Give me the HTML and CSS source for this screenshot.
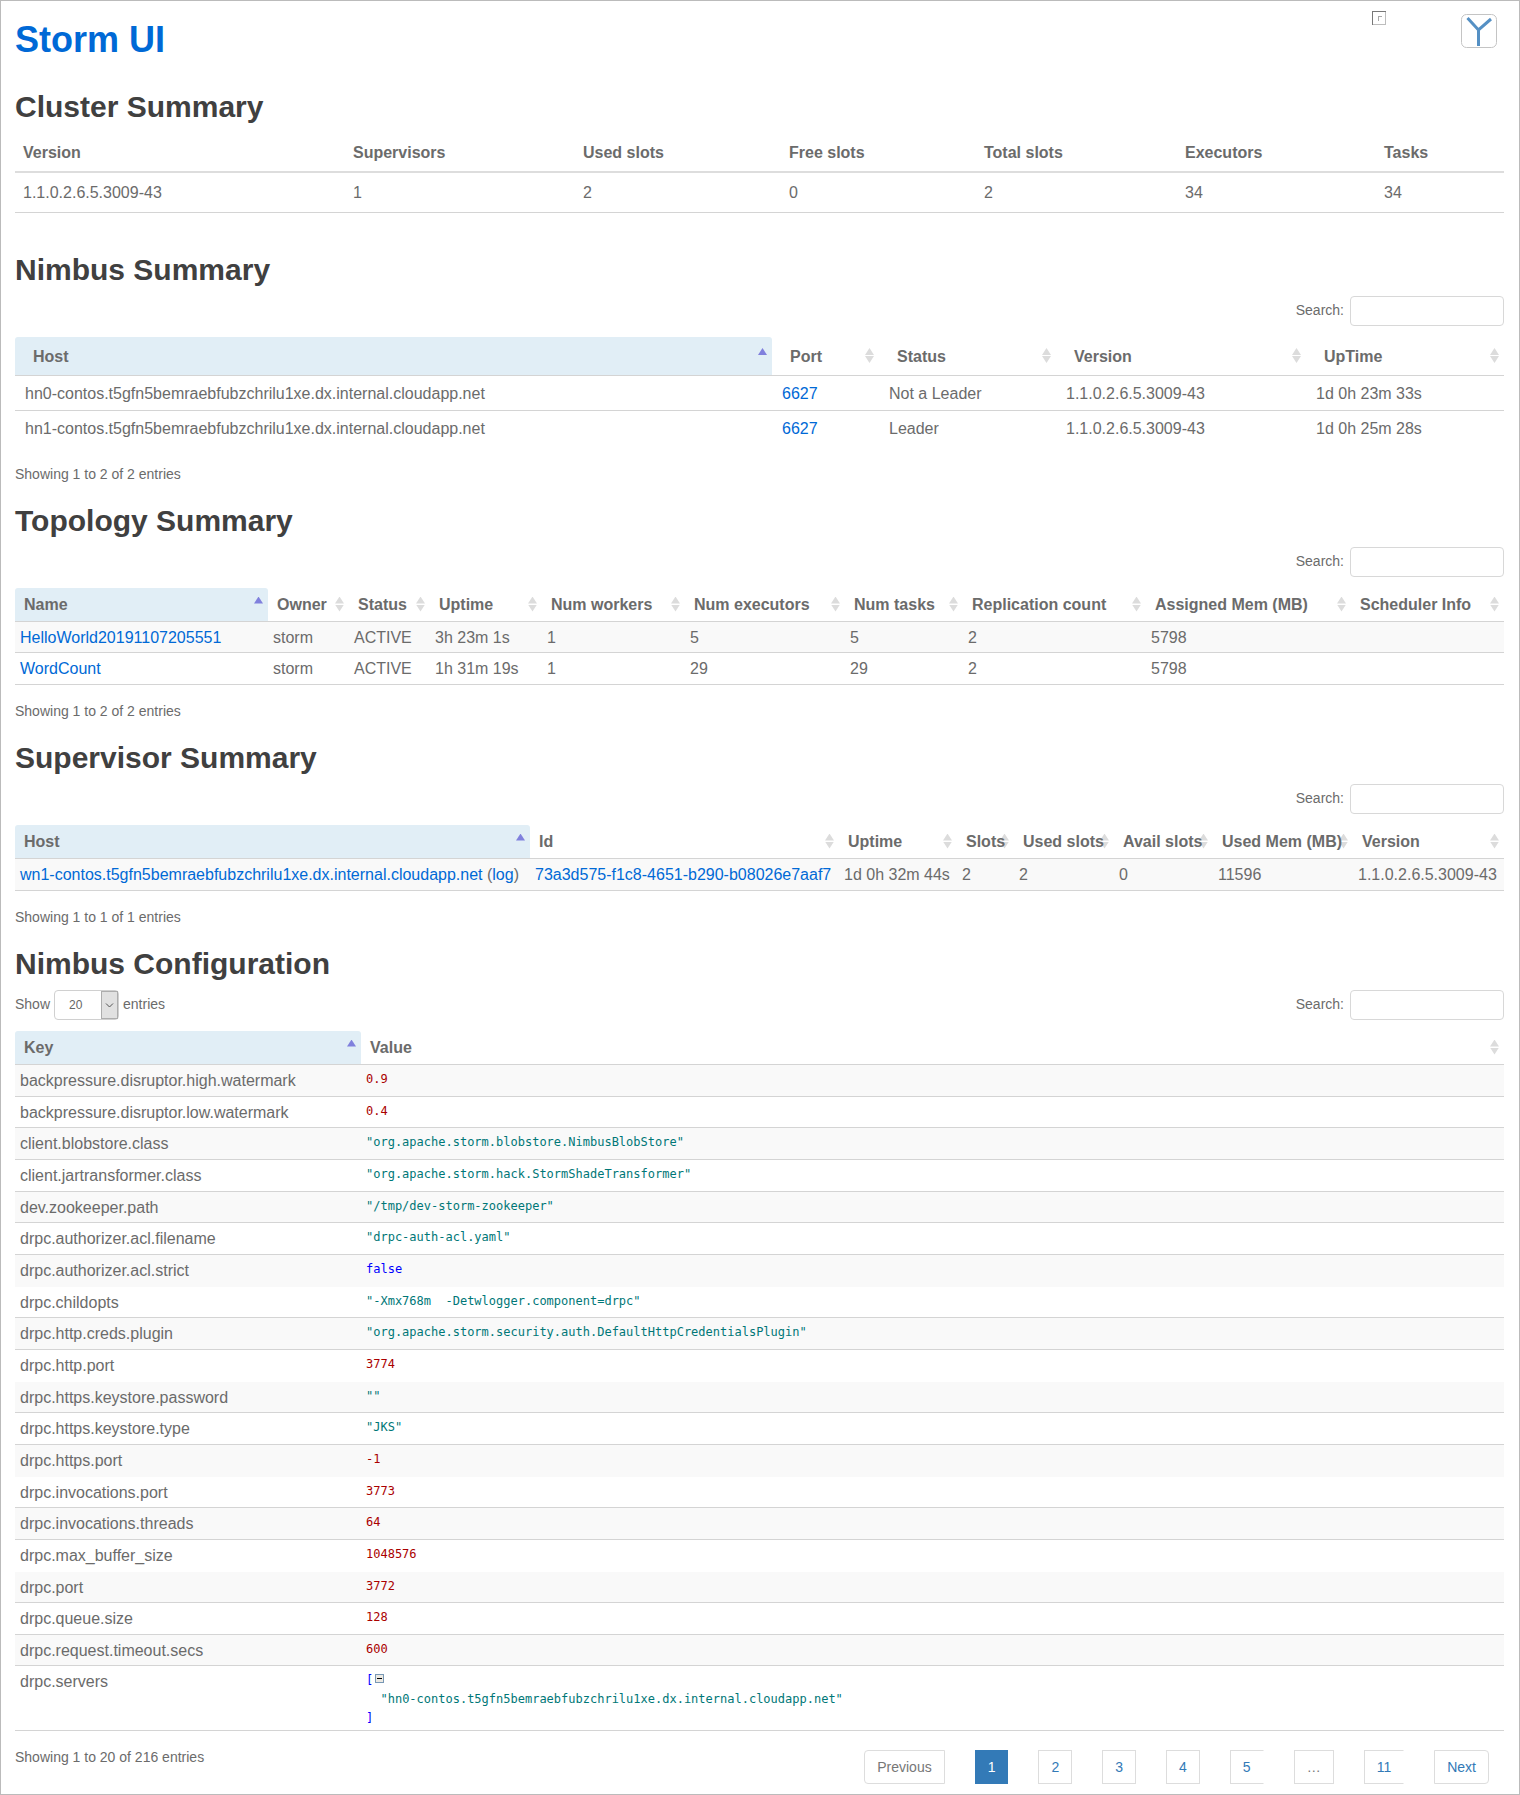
FILE: index.html
```html
<!DOCTYPE html>
<html lang="en">
<head>
<meta charset="utf-8">
<title>Storm UI</title>
<link rel="stylesheet" href="styles.css">
</head>
<body>
<main class="page">
  <header class="header">
    <h1 class="brand"><a href="#">Storm UI</a></h1>
    <div class="header-icons">
      <svg class="placeholder" width="14" height="14" viewBox="0 0 14 14" aria-hidden="true" shape-rendering="crispEdges">
        <path d="M13.5 0V13.5H0" fill="none" stroke="#bdbdbd"/>
        <path d="M0.5 14V0.5H14" fill="none" stroke="#787878"/>
        <path d="M6.5 10V5.5H10" fill="none" stroke="#a8a8a8"/>
      </svg>
      <svg class="logo" width="36" height="34" viewBox="0 0 36 34" role="img" aria-label="Cluster tools">
        <rect x="0.5" y="0.5" width="35" height="33" rx="5" fill="#fff" stroke="#c4c4c4"/>
        <path d="M6.5 4L17.5 16L30 5M17.5 15V32" fill="none" stroke="#5590c4" stroke-width="3"/>
      </svg>
    </div>
  </header>

  <section class="section section-cluster">
    <h2>Cluster Summary</h2>
    <table class="table cluster">
      <colgroup><col><col><col><col><col><col><col></colgroup>
      <thead><tr><th>Version</th><th>Supervisors</th><th>Used slots</th><th>Free slots</th><th>Total slots</th><th>Executors</th><th>Tasks</th></tr></thead>
      <tbody><tr><td>1.1.0.2.6.5.3009-43</td><td>1</td><td>2</td><td>0</td><td>2</td><td>34</td><td>34</td></tr></tbody>
    </table>
  </section>

  <section class="section">
    <h2>Nimbus Summary</h2>
    <div class="toolbar"><label class="search">Search: <input type="search"></label></div>
    <table class="table data nimbus">
      <colgroup><col><col><col><col><col></colgroup>
      <thead><tr><th class="asc"><button>Host</button></th><th><button>Port</button></th><th><button>Status</button></th><th><button>Version</button></th><th><button>UpTime</button></th></tr></thead>
      <tbody>
        <tr><td>hn0-contos.t5gfn5bemraebfubzchrilu1xe.dx.internal.cloudapp.net</td><td><a href="#">6627</a></td><td>Not a Leader</td><td>1.1.0.2.6.5.3009-43</td><td>1d 0h 23m 33s</td></tr>
        <tr><td>hn1-contos.t5gfn5bemraebfubzchrilu1xe.dx.internal.cloudapp.net</td><td><a href="#">6627</a></td><td>Leader</td><td>1.1.0.2.6.5.3009-43</td><td>1d 0h 25m 28s</td></tr>
      </tbody>
    </table>
    <div class="footer"><p class="info">Showing 1 to 2 of 2 entries</p></div>
  </section>

  <section class="section">
    <h2>Topology Summary</h2>
    <div class="toolbar"><label class="search">Search: <input type="search"></label></div>
    <table class="table data striped topology">
      <colgroup><col><col><col><col><col><col><col><col><col><col></colgroup>
      <thead><tr><th class="asc"><button>Name</button></th><th><button>Owner</button></th><th><button>Status</button></th><th><button>Uptime</button></th><th><button>Num workers</button></th><th><button>Num executors</button></th><th><button>Num tasks</button></th><th><button>Replication count</button></th><th><button>Assigned Mem (MB)</button></th><th><button>Scheduler Info</button></th></tr></thead>
      <tbody>
        <tr><td><a href="#">HelloWorld20191107205551</a></td><td>storm</td><td>ACTIVE</td><td>3h 23m 1s</td><td>1</td><td>5</td><td>5</td><td>2</td><td>5798</td><td></td></tr>
        <tr><td><a href="#">WordCount</a></td><td>storm</td><td>ACTIVE</td><td>1h 31m 19s</td><td>1</td><td>29</td><td>29</td><td>2</td><td>5798</td><td></td></tr>
      </tbody>
    </table>
    <div class="footer"><p class="info">Showing 1 to 2 of 2 entries</p></div>
  </section>

  <section class="section">
    <h2>Supervisor Summary</h2>
    <div class="toolbar"><label class="search">Search: <input type="search"></label></div>
    <table class="table data striped supervisor">
      <colgroup><col><col><col><col><col><col><col><col></colgroup>
      <thead><tr><th class="asc"><button>Host</button></th><th><button>Id</button></th><th><button>Uptime</button></th><th><button>Slots</button></th><th><button>Used slots</button></th><th><button>Avail slots</button></th><th><button>Used Mem (MB)</button></th><th><button>Version</button></th></tr></thead>
      <tbody>
        <tr><td><a href="#">wn1-contos.t5gfn5bemraebfubzchrilu1xe.dx.internal.cloudapp.net</a> (<a href="#">log</a>)</td><td><a href="#">73a3d575-f1c8-4651-b290-b08026e7aaf7</a></td><td>1d 0h 32m 44s</td><td>2</td><td>2</td><td>0</td><td>11596</td><td>1.1.0.2.6.5.3009-43</td></tr>
      </tbody>
    </table>
    <div class="footer"><p class="info">Showing 1 to 1 of 1 entries</p></div>
  </section>

  <section class="section">
    <h2>Nimbus Configuration</h2>
    <div class="toolbar">
      <label class="length">Show
        <span class="select"><select><option>20</option><option>40</option><option>60</option></select><svg width="18" height="30" viewBox="0 0 18 30" aria-hidden="true"><rect x="0.5" y="1.5" width="16" height="27" fill="#e1e1e1" stroke="#adadad"/><path d="M5 13.5L8.5 17L12 13.5" fill="none" stroke="#555"/></svg></span>
        entries</label>
      <label class="search">Search: <input type="search"></label>
    </div>
    <table class="table data striped config">
      <colgroup><col><col></colgroup>
      <thead><tr><th class="asc"><button>Key</button></th><th><button>Value</button></th></tr></thead>
      <tbody>
        <tr><td>backpressure.disruptor.high.watermark</td><td><pre class="number">0.9</pre></td></tr>
        <tr><td>backpressure.disruptor.low.watermark</td><td><pre class="number">0.4</pre></td></tr>
        <tr><td>client.blobstore.class</td><td><pre class="string">"org.apache.storm.blobstore.NimbusBlobStore"</pre></td></tr>
        <tr><td>client.jartransformer.class</td><td><pre class="string">"org.apache.storm.hack.StormShadeTransformer"</pre></td></tr>
        <tr><td>dev.zookeeper.path</td><td><pre class="string">"/tmp/dev-storm-zookeeper"</pre></td></tr>
        <tr><td>drpc.authorizer.acl.filename</td><td><pre class="string">"drpc-auth-acl.yaml"</pre></td></tr>
        <tr class="no-rule"><td>drpc.authorizer.acl.strict</td><td><pre class="bool">false</pre></td></tr>
        <tr><td>drpc.childopts</td><td><pre class="string">"-Xmx768m  -Detwlogger.component=drpc"</pre></td></tr>
        <tr><td>drpc.http.creds.plugin</td><td><pre class="string">"org.apache.storm.security.auth.DefaultHttpCredentialsPlugin"</pre></td></tr>
        <tr class="no-rule"><td>drpc.http.port</td><td><pre class="number">3774</pre></td></tr>
        <tr><td>drpc.https.keystore.password</td><td><pre class="string">""</pre></td></tr>
        <tr><td>drpc.https.keystore.type</td><td><pre class="string">"JKS"</pre></td></tr>
        <tr class="no-rule"><td>drpc.https.port</td><td><pre class="number">-1</pre></td></tr>
        <tr><td>drpc.invocations.port</td><td><pre class="number">3773</pre></td></tr>
        <tr><td>drpc.invocations.threads</td><td><pre class="number">64</pre></td></tr>
        <tr class="no-rule"><td>drpc.max_buffer_size</td><td><pre class="number">1048576</pre></td></tr>
        <tr><td>drpc.port</td><td><pre class="number">3772</pre></td></tr>
        <tr><td>drpc.queue.size</td><td><pre class="number">128</pre></td></tr>
        <tr><td>drpc.request.timeout.secs</td><td><pre class="number">600</pre></td></tr>
        <tr><td>drpc.servers</td><td><pre class="bool">[<button class="collapse" aria-label="Collapse"><svg width="9" height="9" viewBox="0 0 9 9" shape-rendering="crispEdges"><rect x="0.5" y="0.5" width="8" height="8" fill="#ece9e2" stroke="#7898b5"/><path d="M2 4.5H7" stroke="#000"/></svg></button>
  <span class="string">"hn0-contos.t5gfn5bemraebfubzchrilu1xe.dx.internal.cloudapp.net"</span>
]</pre></td></tr>
      </tbody>
    </table>
    <div class="footer">
      <p class="info">Showing 1 to 20 of 216 entries</p>
      <nav class="pagination" aria-label="Pages">
        <a class="first disabled" href="#">Previous</a>
        <a class="active" href="#">1</a>
        <a href="#">2</a>
        <a href="#">3</a>
        <a href="#">4</a>
        <a class="open" href="#">5</a>
        <span class="disabled">…</span>
        <a class="open" href="#">11</a>
        <a class="last" href="#">Next</a>
      </nav>
    </div>
  </section>
</main>
</body>
</html>
```
FILE: styles.css
```css
* {
  box-sizing: border-box;
}

body {
  margin: 0;
  background: #fff;
  color: #6b6b6b;
  font-family: "Liberation Sans", Arial, sans-serif;
  font-size: 16px;
  line-height: 22px;
}

a {
  color: #0069d6;
  text-decoration: none;
}

button {
  padding: 0;
  border: 0;
  background: none;
  color: inherit;
  font: inherit;
  cursor: pointer;
}

.page {
  padding: 0 15px 10px 14px;
  border: 1px solid #bbb;
}

/* Header */
.header {
  display: flex;
  justify-content: space-between;
  align-items: flex-start;
  margin-bottom: 30px;
  padding-top: 10px;
}

.brand {
  margin: 9px 0 0;
  font-size: 36px;
  line-height: 40px;
}

.header-icons {
  display: flex;
  align-items: flex-start;
  gap: 75px;
  padding-right: 7px;
}

.logo {
  margin-top: 3px;
}

/* Sections */
.section {
  margin-bottom: 20px;
}

.section-cluster {
  margin-bottom: 40px;
}

.section:last-child {
  margin-bottom: 0;
}

h2 {
  margin: 0 0 10px;
  color: #404040;
  font-size: 30px;
  line-height: 33px;
}

/* Search and page length */
.toolbar {
  display: flex;
  align-items: flex-start;
  height: 30px;
  margin-bottom: 11px;
  font-size: 14px;
  line-height: 28px;
}

.search,
.length {
  display: flex;
  align-items: flex-start;
}

.search {
  gap: 6px;
  margin-left: auto;
}

.search input {
  width: 154px;
  height: 30px;
  padding: 4px 10px;
  border: 1px solid #d8d8d8;
  border-radius: 4px;
  background: #fff;
  font: inherit;
}

.length {
  gap: 4px;
}

.select {
  display: grid;
  grid-template-columns: 47px 18px;
}

.select select {
  grid-area: 1 / 1 / 2 / 3;
  width: 65px;
  height: 30px;
  padding: 0 14px;
  border: 1px solid #d0d0d0;
  border-radius: 4px;
  background: #fff;
  appearance: none;
  color: #666;
  font-family: inherit;
  font-size: 12px;
}

.select svg {
  grid-area: 1 / 2;
  z-index: 1;
  pointer-events: none;
}

/* Tables */
.table {
  width: 100%;
  table-layout: fixed;
  border-collapse: separate;
  border-spacing: 0;
  white-space: nowrap;
}

th,
td {
  text-align: left;
  vertical-align: top;
}

.table td {
  border-bottom: 1px solid #d4d4d4;
}

.cluster th {
  padding: 9px 8px 7px;
  border-bottom: 2px solid #ddd;
}

.cluster td {
  padding: 9px 8px 8px;
}

.data th {
  position: relative;
  padding: 6px 0 5px 9px;
  border-bottom: 1px solid #d4d4d4;
}

.data th button {
  position: relative;
  z-index: 1;
  display: block;
  width: 100%;
  text-align: left;
}

/* Sort arrows */
.data th::before,
.data th::after {
  content: "";
  position: absolute;
  right: 5px;
  width: 9px;
  height: 7px;
  background: #dcdcdc;
}

.data th::before {
  top: calc(50% - 8px);
  clip-path: polygon(50% 0, 100% 100%, 0 100%);
}

.data th::after {
  top: 50%;
  clip-path: polygon(0 0, 100% 0, 50% 100%);
}

.data th.asc {
  border-radius: 3px 3px 0 0;
  background: #e1eef6;
}

.data th.asc::before {
  background: #8080dd;
}

.data th.asc::after {
  display: none;
}

.data td {
  padding: 5px 0 3px 5px;
}

.striped tbody tr:nth-child(odd) {
  background: #f9f9f9;
}

.nimbus {
  border-bottom: 1px solid transparent;
}

.nimbus th {
  padding: 9px 0 7px 18px;
}

.nimbus td {
  padding: 7px 0 5px 10px;
}

.nimbus tr:last-child td {
  height: 36px;
  border-bottom-color: transparent;
}

.topology tr:last-child td,
.supervisor tr:last-child td,
.config td {
  height: 32px;
}

.config tr:nth-child(3n+2) td,
.config tr:nth-child(19) td {
  height: 31px;
}

.config tr.no-rule td {
  border-bottom-color: transparent;
}

.config tbody tr:last-child {
  background: none;
}

.config tbody tr:last-child td {
  height: 65px;
}

.config td:last-child {
  padding: 5px 0 2px 5px;
}

/* Column widths, shared out in proportion */
.cluster col:nth-child(1) { width: 330px; }
.cluster col:nth-child(2) { width: 230px; }
.cluster col:nth-child(3) { width: 206px; }
.cluster col:nth-child(4) { width: 195px; }
.cluster col:nth-child(5) { width: 201px; }
.cluster col:nth-child(6) { width: 199px; }
.cluster col:nth-child(7) { width: 128px; }

.nimbus col:nth-child(1) { width: 757px; }
.nimbus col:nth-child(2) { width: 107px; }
.nimbus col:nth-child(3) { width: 177px; }
.nimbus col:nth-child(4) { width: 250px; }
.nimbus col:nth-child(5) { width: 198px; }

.topology col:nth-child(1) { width: 253px; }
.topology col:nth-child(2) { width: 81px; }
.topology col:nth-child(3) { width: 81px; }
.topology col:nth-child(4) { width: 112px; }
.topology col:nth-child(5) { width: 143px; }
.topology col:nth-child(6) { width: 160px; }
.topology col:nth-child(7) { width: 118px; }
.topology col:nth-child(8) { width: 183px; }
.topology col:nth-child(9) { width: 205px; }
.topology col:nth-child(10) { width: 153px; }

.supervisor col:nth-child(1) { width: 515px; }
.supervisor col:nth-child(2) { width: 309px; }
.supervisor col:nth-child(3) { width: 118px; }
.supervisor col:nth-child(4) { width: 57px; }
.supervisor col:nth-child(5) { width: 100px; }
.supervisor col:nth-child(6) { width: 99px; }
.supervisor col:nth-child(7) { width: 140px; }
.supervisor col:nth-child(8) { width: 151px; }

.config col:nth-child(1) { width: 346px; }
.config col:nth-child(2) { width: 1143px; }

/* Configuration values */
pre {
  margin: 0;
  font-family: "DejaVu Sans Mono", "Liberation Mono", monospace;
  font-size: 12px;
  line-height: 19px;
}

.number {
  color: #a00;
}

.string {
  color: #077;
}

.bool {
  color: #00f;
}

.collapse {
  height: 9px;
  margin-left: 2px;
  line-height: 0;
  vertical-align: 1px;
}

.collapse svg {
  display: block;
}

/* Table footer */
.footer {
  display: flex;
  justify-content: space-between;
  align-items: flex-start;
  margin-top: 16px;
}

.info {
  margin: 0;
  font-size: 14px;
  line-height: 20px;
}

.pagination {
  display: flex;
  gap: 30px;
  margin: 3px 15px 0 0;
  font-size: 14px;
  line-height: 20px;
}

.pagination > * {
  padding: 6px 12px;
  border: 1px solid #ddd;
  color: #337ab7;
}

.pagination .disabled {
  color: #777;
}

.pagination .active {
  border-color: #337ab7;
  background: #337ab7;
  color: #fff;
}

.pagination .first {
  border-radius: 4px 0 0 4px;
}

.pagination .last {
  border-radius: 0 4px 4px 0;
}

.pagination .open {
  border-right-color: transparent;
}
```
